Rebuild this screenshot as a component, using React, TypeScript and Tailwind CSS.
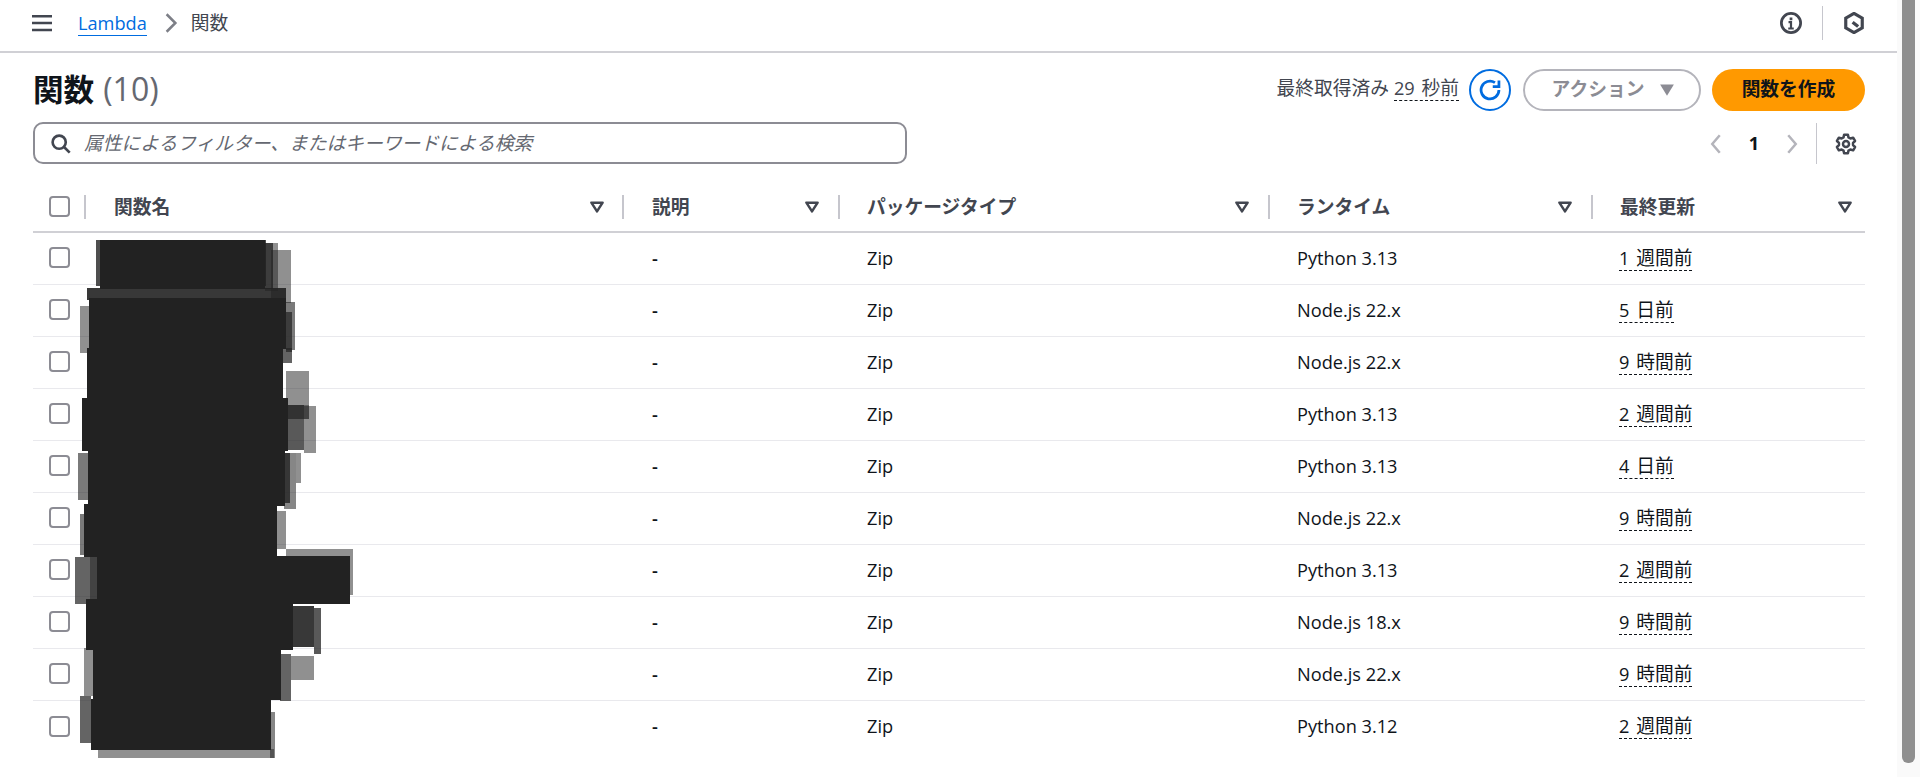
import React from "react";

const FONT = "font-['Open_Sans','Noto_Sans_CJK_JP',sans-serif]";
const CJK = "text-[18.75px]";

const rows = [
  ["Python 3.13", "1", "週間前"],
  ["Node.js 22.x", "5", "日前"],
  ["Node.js 22.x", "9", "時間前"],
  ["Python 3.13", "2", "週間前"],
  ["Python 3.13", "4", "日前"],
  ["Node.js 22.x", "9", "時間前"],
  ["Python 3.13", "2", "週間前"],
  ["Node.js 18.x", "9", "時間前"],
  ["Node.js 22.x", "9", "時間前"],
  ["Python 3.12", "2", "週間前"],
];

const columns = ["関数名", "説明", "パッケージタイプ", "ランタイム", "最終更新"];
const GRID = "grid grid-cols-[51px_538px_216px_430px_323px_274px]";

// [x, y, w, h, opacity]
const marks: [number, number, number, number, number][] = [
  [96, 240, 170, 46, 0.8],
  [265, 243, 8, 46, 0.75],
  [265, 243, 13, 48, 0.5],
  [271, 250, 20, 53, 0.5],
  [100, 240, 165, 49, 1],
  [87, 288, 199, 12, 0.9],
  [80, 306, 10, 47, 0.5],
  [286, 302, 9, 48, 0.6],
  [286, 312, 6, 40, 0.7],
  [89, 298, 197, 51, 1],
  [87, 348, 196, 51, 1],
  [283, 348, 9, 15, 0.7],
  [286, 371, 23, 34, 0.5],
  [288, 405, 16, 45, 0.75],
  [304, 406, 12, 47, 0.5],
  [288, 405, 21, 14, 0.7],
  [82, 398, 206, 53, 1],
  [78, 453, 12, 47, 0.6],
  [284, 453, 6, 50, 0.8],
  [284, 453, 12, 56, 0.55],
  [296, 453, 5, 30, 0.5],
  [88, 450, 197, 56, 1],
  [80, 514, 5, 41, 0.6],
  [276, 511, 10, 38, 0.5],
  [84, 504, 193, 53, 1],
  [75, 557, 15, 47, 0.7],
  [90, 557, 8, 47, 0.85],
  [286, 549, 67, 46, 0.5],
  [97, 556, 253, 48, 1],
  [292, 606, 22, 41, 0.9],
  [314, 608, 7, 46, 0.75],
  [86, 599, 207, 51, 1],
  [84, 648, 9, 48, 0.5],
  [280, 654, 11, 47, 0.7],
  [291, 656, 23, 24, 0.5],
  [93, 649, 188, 51, 1],
  [80, 696, 11, 47, 0.7],
  [98, 749, 176, 9, 0.5],
  [270, 712, 5, 46, 0.55],
  [91, 699, 180, 51, 1],
];

function Icon({ className, children }: { className: string; children: React.ReactNode }) {
  return (
    <svg viewBox="0 0 16 16" fill="none" stroke="currentColor" strokeWidth={2} className={className}>
      {children}
    </svg>
  );
}

function Checkbox() {
  return <div className="w-[21px] h-[21px] rounded-[4px] border-2 border-[#8c8c94] bg-white" />;
}

function FilterCaret() {
  return (
    <svg viewBox="0 0 16 16" className="w-[20px] h-[20px] text-[#424650]" fill="none" stroke="currentColor" strokeWidth={2}>
      <path d="M3.5 4.5h9L8 11.5z" strokeLinejoin="round" />
    </svg>
  );
}

export default function App() {
  return (
    <div className={`relative flex w-[1920px] h-[777px] overflow-hidden bg-white text-[18.2px] text-[#0f141a] ${FONT}`}>
      <main className="w-[1897px] shrink-0">
        <header className="flex items-center h-[53px] border-b-2 border-[#d0d0d5] pl-[32px] pr-[32px] pb-[5px] text-[#424650]">
          <Icon className="w-[20px] h-[20px]">
            <path d="M16 2.5H0M16 8H0M16 13.5H0" />
          </Icon>
          <span className="ml-[26px] text-[#006ce0] border-b border-[#006ce0] leading-[24px]">Lambda</span>
          <svg viewBox="0 0 16 16" fill="none" stroke="#7d7f87" strokeWidth={2} className="w-[20px] h-[20px] ml-[14px]">
            <path d="m4.5 1 7 7-7 7" />
          </svg>
          <span className={`ml-[10px] ${CJK}`}>関数</span>
          <div className="ml-auto flex items-center">
            <Icon className="w-[22px] h-[22px]">
              <circle cx="8" cy="8" r="7" />
              <path d="M6.2 7.3H8V12M6 12h4" strokeWidth={1.6} />
              <path d="M7 4h2v2H7z" fill="currentColor" stroke="none" />
            </Icon>
            <div className="w-px h-[34px] bg-[#c6c6cd] ml-[20px]" />
            <Icon className="w-[22px] h-[22px] ml-[20px]">
              <path d="M8 1 14 4.5v7L8 15l-6-3.5v-7z" strokeWidth={2.3} />
              <path d="M7 7.4 11 10.6" strokeWidth={2.4} />
            </Icon>
          </div>
        </header>

        <div className="pl-[33px] pr-[32px]">
          <div className="flex items-center justify-between h-[42px] mt-[16px]">
            <h1 className="text-[30.6px] leading-[42px] font-bold pb-[2px]">
              関数 <span className="ml-[1px] text-[32px] font-normal text-[#656871]">(10)</span>
            </h1>
            <div className="flex items-center">
              <div className="flex items-center pb-[4px]">
                <span className={`text-[#424650] ${CJK}`}>最終取得済み</span>
                <span className="ml-[5px] text-[#424650] border-b border-dashed border-[#0f141a] leading-[24px]">
                  29 <span className={`ml-[2px] ${CJK}`}>秒前</span>
                </span>
              </div>
              <div className="ml-[10px] w-[42px] h-[42px] rounded-full border-2 border-[#006ce0] flex items-center justify-center text-[#006ce0]">
                <Icon className="w-[22px] h-[22px]">
                  <path d="M14.5 8A6.5 6.5 0 1 1 11.6 2.6" />
                  <path d="M14.5 1v4.5H10" />
                </Icon>
              </div>
              <button className={`ml-[12px] w-[178px] h-[42px] rounded-full border-2 border-[#b4b4bb] flex items-center justify-center gap-[13px] pl-[5px] pb-[2px] font-bold text-[#8c8c94] ${CJK}`}>
                <span>アクション</span>
                <svg viewBox="0 0 16 16" className="w-[20px] h-[20px] mt-[2px]" fill="currentColor">
                  <path d="M2.5 3.5h11L8 12.5z" />
                </svg>
              </button>
              <button className={`ml-[11px] w-[153px] h-[42px] rounded-full bg-[#ff9900] pb-[2px] font-bold text-[#0f141a] ${CJK}`}>
                関数を作成
              </button>
            </div>
          </div>

          <div className="flex items-stretch justify-between h-[42px] mt-[11px]">
            <div className="w-[874px] flex items-center rounded-[10px] border-2 border-[#8c8c94] pl-[15px]">
              <Icon className="w-[21px] h-[21px] text-[#424650]">
                <circle cx="7" cy="7" r="5" />
                <path d="m15 15-4.5-4.5" />
              </Icon>
              <span className={`ml-[13px] italic text-[#656871] ${CJK}`}>属性によるフィルター、またはキーワードによる検索</span>
            </div>
            <div className="flex items-center pt-[1px]">
              <svg viewBox="0 0 16 16" fill="none" stroke="#b4b4bb" strokeWidth={2} className="w-[20px] h-[20px]">
                <path d="m11 1-6 7 6 7" />
              </svg>
              <span className="w-[56px] text-center font-bold">1</span>
              <svg viewBox="0 0 16 16" fill="none" stroke="#b4b4bb" strokeWidth={2} className="w-[20px] h-[20px]">
                <path d="m5 1 6 7-6 7" />
              </svg>
              <div className="w-px h-[41px] bg-[#c6c6cd] ml-[14px]" />
              <svg viewBox="0 0 16 16" fill="none" stroke="#424650" strokeWidth={1.8} className="w-[22px] h-[22px] ml-[18px] mr-[8px]">
                <circle cx="8" cy="8" r="2.2" />
                <path d="M6.6 1.2h2.8l.4 2 1.4.8 2-.6 1.4 2.4-1.5 1.4v1.6l1.5 1.4-1.4 2.4-2-.6-1.4.8-.4 2H6.6l-.4-2-1.4-.8-2 .6-1.4-2.4 1.5-1.4V7.2L1.4 5.8l1.4-2.4 2 .6 1.4-.8z" strokeLinejoin="round" />
              </svg>
            </div>
          </div>

          <div className={`${GRID} mt-[20px] h-[49px] border-b-2 border-[#d0d0d5] font-bold text-[#424650] ${CJK}`}>
            <div className="flex items-center pl-[16px] pb-[3px]">
              <Checkbox />
            </div>
            {columns.map((c, i) => (
              <div key={c} className="flex items-center pb-[1px]">
                <div className="w-[2px] h-[24px] bg-[#c6c6cd]" />
                <span className={i < 2 ? "ml-[28px]" : "ml-[27px]"}>{c}</span>
                <span className={i === 4 ? "ml-auto mr-[10px]" : i === 0 ? "ml-auto mr-[15px]" : "ml-auto mr-[16px]"}>
                  <FilterCaret />
                </span>
              </div>
            ))}
          </div>

          {rows.map(([runtime, num, unit], i) => (
            <div key={i} className={`${GRID} h-[52px] items-center ${i < 9 ? "border-b border-[#e9e9ed]" : ""}`}>
              <div className="pl-[16px] pb-[2px]">
                <Checkbox />
              </div>
              <div />
              <div className="pl-[30px] font-semibold">-</div>
              <div className="pl-[29px]">Zip</div>
              <div className="pl-[29px]">{runtime}</div>
              <div className="pl-[28px]">
                <span className="border-b border-dashed border-[#0f141a] leading-[24px] inline-block">
                  {num} <span className={`ml-[2px] ${CJK}`}>{unit}</span>
                </span>
              </div>
            </div>
          ))}
        </div>
      </main>

      <div className="flex-1 bg-[#fafafa]">
        <div className="ml-[5px] w-[13px] h-[763px] bg-[#8f8f8f] rounded-b-[6px]" />
      </div>

      <svg viewBox="0 0 1920 777" className="absolute left-0 top-0 w-[1920px] h-[777px] pointer-events-none blur-[0.4px]">
        {marks.map(([x, y, w, h, o], i) => (
          <rect key={i} x={x} y={y} width={w} height={h} fill="#222" opacity={o} />
        ))}
      </svg>
    </div>
  );
}
